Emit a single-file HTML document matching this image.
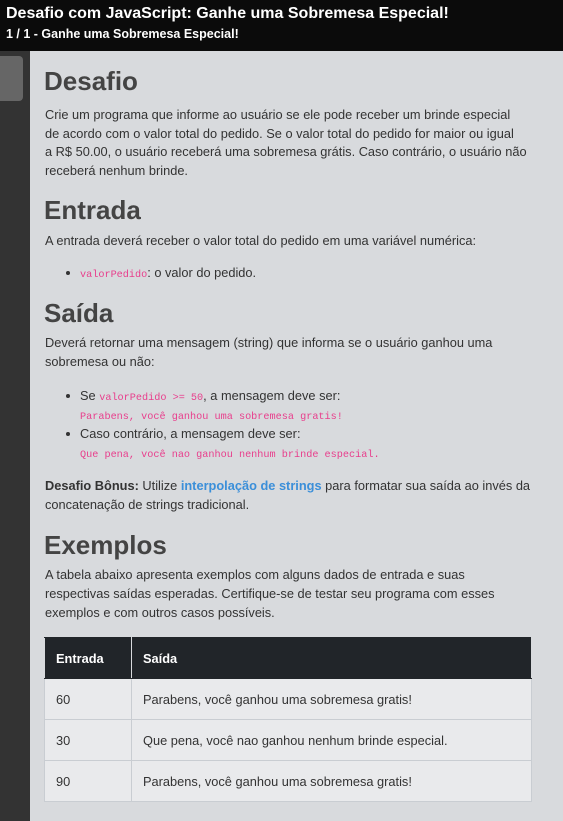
<!DOCTYPE html>
<html><head><meta charset="utf-8"><style>
*{margin:0;padding:0;box-sizing:border-box}
body{width:563px;height:821px;overflow:hidden;background:#d8dadd;font-family:"Liberation Sans",sans-serif;color:#333;position:relative}
.hd{position:absolute;left:0;top:0;width:563px;height:51px;background:#0b0b0b;color:#fff;font-weight:bold}
.t1{position:absolute;left:6px;top:5px;font-size:16px;white-space:nowrap}
.t2{position:absolute;left:6px;top:27px;font-size:12.5px;white-space:nowrap}
.sb{position:absolute;left:0;top:51px;width:30px;height:770px;background:#333}
.th{position:absolute;left:0;top:56px;width:23px;height:45px;background:#666;border-radius:0 4px 4px 0}
.l{position:absolute;left:45px;font-size:12.8px;white-space:nowrap;line-height:19px;color:#333}
.h{position:absolute;left:44px;font-size:26px;font-weight:bold;color:#444;white-space:nowrap}
code{font-family:"Liberation Mono",monospace;font-size:10.2px;color:#e83e8c}
.dot{position:absolute;left:66px;width:4px;height:4px;border-radius:50%;background:#333}
a{color:#3b8fd9;font-weight:bold;text-decoration:none}
table{position:absolute;left:44px;top:637px;width:488px;border-collapse:collapse;font-size:12.8px}
th{background:#212529;color:#fff;text-align:left;height:41px;padding-left:11px;border:1px solid #c9cdd2;border-color:#212529 #d8dadd}
td{background:#e9eaec;height:41px;padding-left:11px;border:1px solid #c9cdd2;color:#333}
</style></head><body>
<div class="hd"><div class="t1">Desafio com JavaScript: Ganhe uma Sobremesa Especial!</div><div class="t2">1 / 1 - Ganhe uma Sobremesa Especial!</div></div>
<div class="sb"></div><div class="th"></div>
<div class="h" style="top:66px">Desafio</div>
<div class="l" style="top:105px">Crie um programa que informe ao usuário se ele pode receber um brinde especial</div>
<div class="l" style="top:124px">de acordo com o valor total do pedido. Se o valor total do pedido for maior ou igual</div>
<div class="l" style="top:142px">a R$ 50.00, o usuário receberá uma sobremesa grátis. Caso contrário, o usuário não</div>
<div class="l" style="top:161px">receberá nenhum brinde.</div>
<div class="h" style="top:195px">Entrada</div>
<div class="l" style="top:231px">A entrada deverá receber o valor total do pedido em uma variável numérica:</div>
<div class="dot" style="top:271px"></div>
<div class="l" style="top:263px;left:80px"><code>valorPedido</code>: o valor do pedido.</div>
<div class="h" style="top:298px">Saída</div>
<div class="l" style="top:333px">Deverá retornar uma mensagem (string) que informa se o usuário ganhou uma</div>
<div class="l" style="top:352px">sobremesa ou não:</div>
<div class="dot" style="top:394px"></div>
<div class="l" style="top:386px;left:80px">Se <code>valorPedido &gt;= 50</code>, a mensagem deve ser:</div>
<div class="l" style="top:405px;left:80px"><code>Parabens, você ganhou uma sobremesa gratis!</code></div>
<div class="dot" style="top:432px"></div>
<div class="l" style="top:424px;left:80px">Caso contrário, a mensagem deve ser:</div>
<div class="l" style="top:443px;left:80px"><code>Que pena, você nao ganhou nenhum brinde especial.</code></div>
<div class="l" style="top:476px"><b>Desafio Bônus:</b> Utilize <a>interpolação de strings</a> para formatar sua saída ao invés da</div>
<div class="l" style="top:495px">concatenação de strings tradicional.</div>
<div class="h" style="top:530px">Exemplos</div>
<div class="l" style="top:565px">A tabela abaixo apresenta exemplos com alguns dados de entrada e suas</div>
<div class="l" style="top:584px">respectivas saídas esperadas. Certifique-se de testar seu programa com esses</div>
<div class="l" style="top:603px">exemplos e com outros casos possíveis.</div>
<table>
<tr><th style="width:87px">Entrada</th><th>Saída</th></tr>
<tr><td>60</td><td>Parabens, você ganhou uma sobremesa gratis!</td></tr>
<tr><td>30</td><td>Que pena, você nao ganhou nenhum brinde especial.</td></tr>
<tr><td>90</td><td>Parabens, você ganhou uma sobremesa gratis!</td></tr>
</table>
</body></html>
